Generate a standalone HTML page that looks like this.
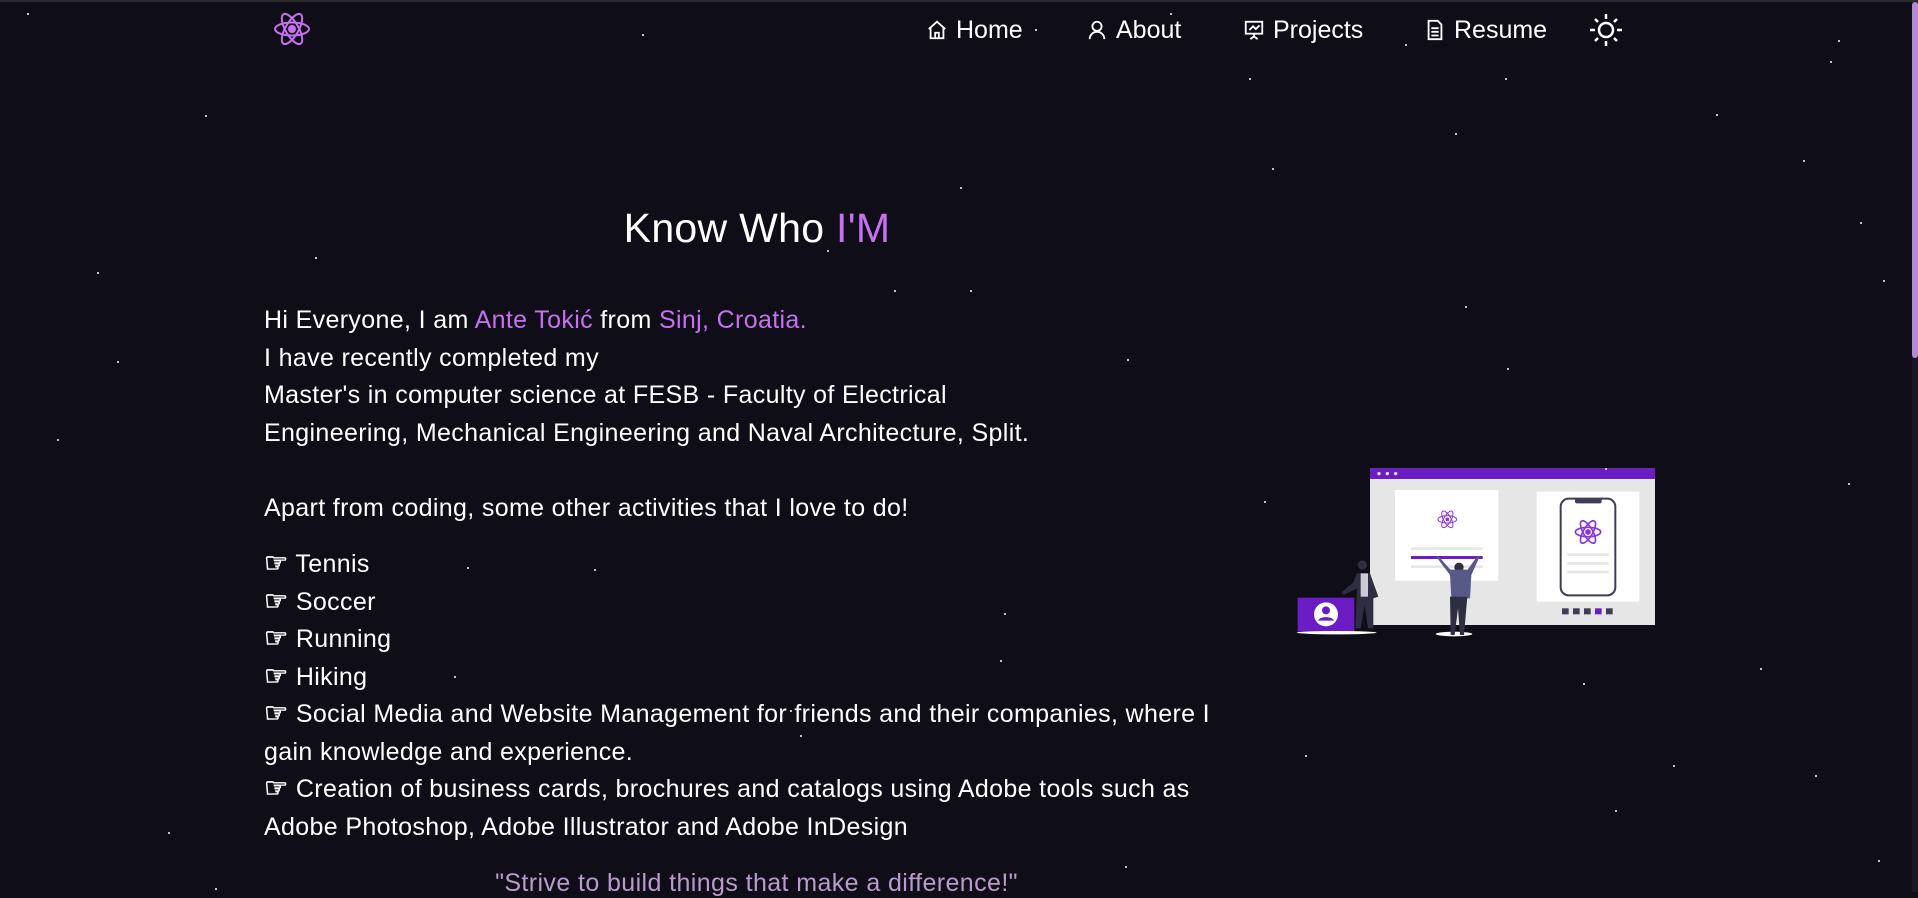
<!DOCTYPE html>
<html><head><meta charset="utf-8">
<style>
*{margin:0;padding:0;box-sizing:border-box}
html,body{width:1918px;height:892px;overflow:hidden;background:#0f0d17;font-family:"Liberation Sans",sans-serif;color:#fff}
.top{position:absolute;left:0;top:0;width:1918px;height:2px;background:#2b2b2f}
.sb{position:absolute;right:0;top:2px;width:6px;height:890px;background:#1a1622}
.sb div{width:6px;height:356px;background:#b48ad4;border-radius:3px}
.star{position:absolute;width:2px;height:2px;background:#fff;border-radius:1px}
.nav{position:absolute;top:13px;font-size:25px;line-height:34px;display:flex;align-items:center;gap:8px}
.nav svg{width:22px;height:22px}
h1{position:absolute;left:0;width:1514px;text-align:center;top:204px;font-size:41px;font-weight:normal;line-height:48px;letter-spacing:0.3px}
.p{color:#c770f0}
.txt{position:absolute;left:264px;width:962px;font-size:25px;line-height:37.5px;letter-spacing:0.35px}
.h{font-size:27px;font-weight:bold;line-height:0}
.q{position:absolute;left:264px;width:985px;text-align:center;top:869px;font-size:25px;letter-spacing:0.4px;color:#b89ccb}
</style></head><body>
<div class="top"></div>
<div class="sb"><div></div></div>

<svg style="position:absolute;left:272px;top:10px" width="40" height="38" viewBox="-20 -19 40 38" fill="none" stroke="#c770f0" stroke-width="2">
<ellipse rx="17" ry="6.5"/><ellipse rx="17" ry="6.5" transform="rotate(60)"/><ellipse rx="17" ry="6.5" transform="rotate(120)"/><circle r="3" fill="#c770f0"/></svg>

<div class="nav" style="left:926px"><svg viewBox="0 0 24 24" fill="none" stroke="#fff" stroke-width="2"><path d="M3 11 12 3l9 8M5 9v12h14V9M10 21v-6h4v6"/></svg><span>Home</span></div>
<div class="nav" style="left:1086px"><svg viewBox="0 0 24 24" fill="none" stroke="#fff" stroke-width="2"><circle cx="12" cy="8" r="5"/><path d="M4 22c0-5 4-8 8-8s8 3 8 8"/></svg><span>About</span></div>
<div class="nav" style="left:1243px"><svg viewBox="0 0 24 24" fill="none" stroke="#fff" stroke-width="2"><rect x="3" y="3" width="18" height="13"/><path d="M7 12l4-4 3 3 4-4M12 16v3M8 22l4-3 4 3"/></svg><span>Projects</span></div>
<div class="nav" style="left:1424px"><svg viewBox="0 0 24 24" fill="none" stroke="#fff" stroke-width="2"><path d="M5 2h10l4 4v16H5z"/><path d="M8 10h8M8 14h8M8 18h8"/></svg><span>Resume</span></div>
<svg style="position:absolute;left:1589px;top:13px" width="34" height="34" viewBox="-17 -17 34 34" fill="none" stroke="#fff" stroke-width="2.5"><circle r="7"/><path d="M0-16v5M0 11v5M-16 0h5M11 0h5M-11-11l3 3M8 8l3 3M-11 11l3-3M8-8l3-3"/></svg>

<h1>Know Who <span class="p">I'M</span></h1>

<div class="txt" style="top:302px">Hi Everyone, I am <span class="p">Ante Tokić</span> from <span class="p">Sinj, Croatia.</span><br>I have recently completed my<br>Master's in computer science at FESB - Faculty of Electrical<br>Engineering, Mechanical Engineering and Naval Architecture, Split.<br><br>Apart from coding, some other activities that I love to do!</div>
<div class="txt" style="top:546px"><span class="h">☞</span> Tennis<br><span class="h">☞</span> Soccer<br><span class="h">☞</span> Running<br><span class="h">☞</span> Hiking<br><span class="h">☞</span> Social Media and Website Management for friends and their companies, where I gain knowledge and experience.<br><span class="h">☞</span> Creation of business cards, brochures and catalogs using Adobe tools such as Adobe Photoshop, Adobe Illustrator and Adobe InDesign</div>
<div class="q">"Strive to build things that make a difference!"</div>

<svg style="position:absolute;left:1280px;top:450px" width="400" height="200" viewBox="0 0 1200 600">
<rect x="270" y="55" width="855" height="470" fill="#e6e6e6"/>
<rect x="270" y="55" width="855" height="32" fill="#6c1cc4"/>
<circle cx="297" cy="71" r="5" fill="#e6e6e6"/><circle cx="322" cy="71" r="5" fill="#e6e6e6"/><circle cx="347" cy="71" r="5" fill="#e6e6e6"/>
<rect x="345" y="120" width="310" height="272" fill="#fff"/>
<g transform="translate(502,208)" fill="none" stroke="#8b35d6" stroke-width="3"><ellipse rx="28" ry="11"/><ellipse rx="28" ry="11" transform="rotate(60)"/><ellipse rx="28" ry="11" transform="rotate(120)"/><circle r="4" fill="#8b35d6"/></g>
<rect x="393" y="292" width="215" height="8" fill="#e6e6e6"/><rect x="393" y="318" width="215" height="9" fill="#6c1cc4"/><rect x="393" y="346" width="215" height="8" fill="#e6e6e6"/>
<rect x="770" y="125" width="308" height="330" fill="#fff"/>
<rect x="842" y="146" width="164" height="290" rx="24" fill="#fff" stroke="#3f3d56" stroke-width="6"/>
<rect x="885" y="146" width="80" height="14" rx="6" fill="#3f3d56"/>
<g transform="translate(924,246)" fill="none" stroke="#8b35d6" stroke-width="5"><ellipse rx="38" ry="14"/><ellipse rx="38" ry="14" transform="rotate(60)"/><ellipse rx="38" ry="14" transform="rotate(120)"/><circle r="6" fill="#8b35d6"/></g>
<rect x="862" y="310" width="124" height="8" fill="#e6e6e6"/><rect x="862" y="336" width="124" height="8" fill="#e6e6e6"/><rect x="862" y="362" width="124" height="8" fill="#e6e6e6"/>
<g fill="#3f3d56"><rect x="846" y="475" width="20" height="18"/><rect x="879" y="475" width="20" height="18"/><rect x="912" y="475" width="20" height="18"/><rect x="978" y="475" width="20" height="18"/></g><rect x="945" y="475" width="20" height="18" fill="#6c1cc4"/>
<rect x="53" y="443" width="170" height="102" fill="#6c1cc4"/>
<circle cx="138" cy="493" r="36" fill="#fff"/><circle cx="138" cy="481" r="12" fill="#6c1cc4"/><path d="M114 512c6-14 42-14 48 0" fill="#6c1cc4"/>
<ellipse cx="170" cy="548" rx="120" ry="5" fill="#fff"/><ellipse cx="522" cy="552" rx="55" ry="7" fill="#fff"/>
<circle cx="247" cy="345" r="14" fill="#2f2e41"/><path d="M230 370h40l25 70-15 5v90h-16l-10-70-12 70h-16l5-120-40 20-6-8 35-30z" fill="#2f2e41"/><rect x="242" y="370" width="22" height="70" fill="#cbcbd6"/>
<circle cx="537" cy="352" r="14" fill="#2f2e41"/><path d="M470 322l6-3 35 40h52l30-42 6 3-25 55-4 70h-56l-4-70z" fill="#575a89"/><path d="M510 440h52l-10 115h-12l-6-80-10 80h-12z" fill="#2f2e41"/>
</svg>

<div class="star" style="left:27px;top:13px"></div><div class="star" style="left:642px;top:34px"></div><div class="star" style="left:1170px;top:13px"></div><div class="star" style="left:1035px;top:29px"></div><div class="star" style="left:1405px;top:44px"></div><div class="star" style="left:1838px;top:40px"></div><div class="star" style="left:1830px;top:61px"></div><div class="star" style="left:1249px;top:78px"></div><div class="star" style="left:1505px;top:78px"></div><div class="star" style="left:205px;top:115px"></div><div class="star" style="left:1716px;top:114px"></div><div class="star" style="left:1455px;top:133px"></div><div class="star" style="left:1803px;top:160px"></div><div class="star" style="left:1272px;top:168px"></div><div class="star" style="left:960px;top:187px"></div><div class="star" style="left:1860px;top:222px"></div><div class="star" style="left:315px;top:257px"></div><div class="star" style="left:97px;top:272px"></div><div class="star" style="left:827px;top:250px"></div><div class="star" style="left:894px;top:290px"></div><div class="star" style="left:970px;top:290px"></div><div class="star" style="left:1465px;top:306px"></div><div class="star" style="left:1883px;top:280px"></div><div class="star" style="left:1127px;top:359px"></div><div class="star" style="left:1507px;top:368px"></div><div class="star" style="left:117px;top:361px"></div><div class="star" style="left:57px;top:439px"></div><div class="star" style="left:1264px;top:501px"></div><div class="star" style="left:1605px;top:468px"></div><div class="star" style="left:1848px;top:483px"></div><div class="star" style="left:467px;top:567px"></div><div class="star" style="left:594px;top:569px"></div><div class="star" style="left:1004px;top:613px"></div><div class="star" style="left:1583px;top:683px"></div><div class="star" style="left:1760px;top:668px"></div><div class="star" style="left:1000px;top:660px"></div><div class="star" style="left:790px;top:710px"></div><div class="star" style="left:454px;top:676px"></div><div class="star" style="left:1305px;top:755px"></div><div class="star" style="left:1673px;top:765px"></div><div class="star" style="left:1815px;top:775px"></div><div class="star" style="left:800px;top:735px"></div><div class="star" style="left:168px;top:832px"></div><div class="star" style="left:215px;top:888px"></div><div class="star" style="left:1125px;top:866px"></div><div class="star" style="left:1615px;top:810px"></div><div class="star" style="left:1878px;top:860px"></div>
</body></html>
